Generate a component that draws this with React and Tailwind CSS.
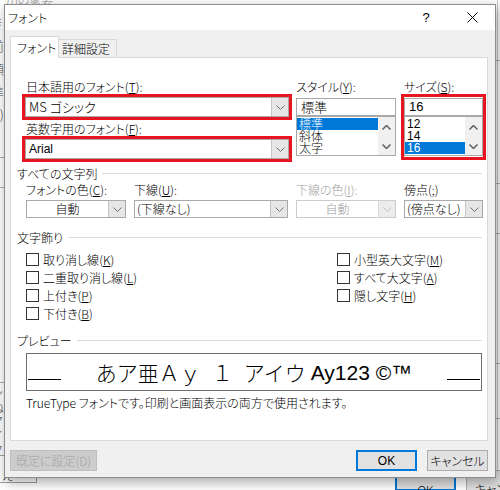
import React from 'react';

function Caret({ up = false, className = 'stroke-[#606060]', w = 1 }) {
  return (
    <svg width="9" height="5" viewBox="0 0 9 5" fill="none" className={className}>
      <path d={up ? 'M0.5 4.5 L4.5 0.5 L8.5 4.5' : 'M0.5 0.5 L4.5 4.5 L8.5 0.5'} strokeWidth={w} />
    </svg>
  );
}

function Combo({ width, height = 'h-[18px]', center = false, disabled = false, children }) {
  return (
    <div
      className={`flex ${width} ${height} border bg-white ${
        disabled ? 'border-[#cccccc] text-[#a0a0a0]' : 'border-[#a9a9a9] text-black'
      }`}
    >
      <div className={`flex-1 flex items-center text-[12px] ${center ? 'justify-center' : 'pl-[2px]'}`}>
        {children}
      </div>
      <div
        className={`w-[17px] flex items-center justify-center border-l ${
          disabled ? 'bg-[#ececec] border-[#dadada]' : 'bg-[#e6e6e6] border-[#c4c4c4]'
        }`}
      >
        <Caret className={disabled ? 'stroke-[#c0c0c0]' : 'stroke-[#707070]'} />
      </div>
    </div>
  );
}

function ListBox({ items, selected }) {
  return (
    <div className="flex h-[40px] border border-[#a9a9a9] bg-white">
      <div className="flex-1 pt-px text-[12px] leading-[12px]">
        {items.map((it) => (
          <div
            key={it}
            className={`h-[12px] pl-[2px] ${it === selected ? 'bg-[#0078d7] text-white' : 'text-black'}`}
          >
            {it}
          </div>
        ))}
      </div>
      <div className="w-[17px] bg-[#f0f0f0] flex flex-col items-center justify-between pt-[8px] pb-[6px]">
        <Caret up className="stroke-[#606060]" w={1.5} />
        <Caret className="stroke-[#606060]" w={1.5} />
      </div>
    </div>
  );
}

function Section({ title, className = '' }) {
  return (
    <div className={`flex items-center h-[15px] pl-[6px] pr-[5px] ${className}`}>
      <span className="text-[12px] leading-[15px]">{title}</span>
      <div className="flex-1 h-px bg-[#dcdcdc] ml-[5px]" />
    </div>
  );
}

function Check({ label, k }) {
  return (
    <div className="flex items-center h-[18px]">
      <div className="w-[13px] h-[13px] border border-[#333333] bg-white" />
      <span className="ml-[4px] text-[12px] leading-[15px]">
        {label}(<span className="underline underline-offset-1">{k}</span>)
      </span>
    </div>
  );
}

function Label({ pre, k, post = '):', className = '' }) {
  return (
    <div className={`h-[15px] text-[12px] leading-[15px] ${className}`}>
      {pre}(<span className="underline underline-offset-1">{k}</span>
      {post}
    </div>
  );
}

function Backdrop() {
  return (
    <>
      <span className="absolute left-[6px] top-[-9px] text-[12px] text-[#8a8a8a]">川の家要</span>
      <div className="absolute left-[-9px] top-[14px] flex flex-col gap-[6px] text-[13px] leading-[17px] text-[#555]">
        <span>き</span>
        <span>前</span>
        <span>順</span>
        <span>準</span>
        <span>D)</span>
      </div>
      <div className="absolute left-0 top-[157px] w-[5px] h-px bg-[#b0b0b0]" />
      <div className="absolute left-[-8px] top-[152px] text-[12px] text-[#aaa]">S</div>
      <div className="absolute left-0 top-[187px] w-[5px] h-px bg-[#b0b0b0]" />
      <div className="absolute left-0 top-[382px] w-[5px] h-px bg-[#b0b0b0]" />
      <div className="absolute left-[-9px] top-[386px] flex flex-col text-[13px] leading-[14px] text-[#555]">
        <span>ン</span>
        <span>ぬ</span>
        <span>マ</span>
        <span>イ</span>
        <span>ク</span>
      </div>
      <div className="absolute left-[-5px] top-[455px] w-[42px] h-[28px] border border-[#a0a0a0] bg-white text-[12px] pl-[6px] pt-[10px]">え</div>
      <div className="absolute left-[497px] top-0 w-px h-[490px] bg-[#c8c8c8]" />
      <div className="absolute left-[496px] top-[60px] w-[5px] h-px bg-[#b0b0b0]" />
      <div className="absolute left-[496px] top-[183px] w-[5px] h-px bg-[#b0b0b0]" />
      <div className="absolute left-[496px] top-[233px] w-[5px] h-px bg-[#b0b0b0]" />
      <div className="absolute left-[496px] top-[363px] w-[5px] h-px bg-[#b0b0b0]" />
      <div className="absolute left-[496px] top-[418px] w-[5px] h-px bg-[#b0b0b0]" />
      <div className="absolute left-[395px] top-[470px] w-[61px] h-[21px] border-2 border-[#0078d7] bg-[#e1e1e1] flex justify-center pt-[9px] text-[12px]">
        OK
      </div>
      <div className="absolute left-[466px] top-[470px] w-[50px] h-[21px] border border-[#adadad] bg-[#e1e1e1] pl-[8px] pt-[9px] text-[12px]">
        キャン
      </div>
    </>
  );
}

export default function App() {
  return (
    <div className="relative w-[500px] h-[490px] overflow-hidden bg-white text-black font-light font-['Noto_Sans_CJK_JP','Noto_Sans',sans-serif] [font-feature-settings:'palt']">
      <Backdrop />
      <div className="absolute left-[4px] top-[4px] w-[492px] h-[474px] border border-[#8c8c8c] bg-[#f0f0f0] shadow-[2px_4px_12px_rgba(0,0,0,0.35)] flex flex-col">
        {/* title bar */}
        <div className="h-[25px] bg-white flex items-center">
          <span className="flex-1 pl-[3px] text-[12px]">フォント</span>
          <div className="w-[46px] h-full flex items-center justify-center text-[13px] font-['Liberation_Sans',sans-serif]">
            ?
          </div>
          <div className="w-[46px] h-full flex items-center justify-center">
            <svg width="11" height="11" viewBox="0 0 11 11" fill="none" className="stroke-black">
              <path d="M0.5 0.5 L10.5 10.5 M10.5 0.5 L0.5 10.5" strokeWidth="1" />
            </svg>
          </div>
        </div>

        {/* body */}
        <div className="flex-1 flex flex-col pt-[6px]">
          <div className="flex items-end h-[22px] ml-[5px] -mb-px">
            <div className="relative z-10 h-[22px] w-[49px] bg-white border border-b-0 border-[#d9d9d9] pl-[6px] pt-[4px] text-[12px] leading-[13px]">
              フォント
            </div>
            <div className="h-[19px] w-[58px] border border-l-0 border-[#d9d9d9] bg-[#f0f0f0] pl-[3px] pt-[2px] text-[12px] leading-[13px]">
              詳細設定
            </div>
          </div>

          {/* tab panel */}
          <div className="ml-[5px] w-[478px] h-[384px] border border-[#d9d9d9] bg-white flex flex-col">
            {/* fonts / style / size */}
            <div className="flex items-start pt-[21px] pl-[11px]">
              <div className="w-[270px] flex flex-col">
                <Label pre="日本語用のフォント" k="T" className="ml-[4px]" />
                <div className="border-[3px] border-[#e8141f]">
                  <Combo width="w-full" height="h-[20px]">
                    <span className="pl-px text-[13px]">MS ゴシック</span>
                  </Combo>
                </div>
                <Label pre="英数字用のフォント" k="F" className="ml-[4px] h-[14px] leading-[14px] mt-px" />
                <div className="border-[3px] border-[#e8141f]">
                  <Combo width="w-full" height="h-[20px]">
                    <span className="pl-px text-[12px] font-normal font-['Liberation_Sans',sans-serif]">Arial</span>
                  </Combo>
                </div>
              </div>

              <div className="w-[100px] ml-[4px] flex flex-col">
                <Label pre="スタイル" k="Y" />
                <div className="mt-[4px] h-[18px] border border-[#a9a9a9] bg-white flex items-center pl-[4px] text-[13px]">
                  標準
                </div>
                <ListBox items={['標準', '斜体', '太字']} selected="標準" />
              </div>

              <div className="w-[85px] ml-[5px] flex flex-col">
                <Label pre="サイズ" k="S" className="ml-[3px]" />
                <div className="border-[3px] border-[#e8141f] pt-px pb-px">
                  <div className="h-[18px] border border-[#a9a9a9] bg-white flex items-center pl-[4px] text-[13px] font-normal font-['Liberation_Sans',sans-serif]">
                    16
                  </div>
                  <div className="font-normal font-['Liberation_Sans',sans-serif]">
                    <ListBox items={['12', '14', '16']} selected="16" />
                  </div>
                </div>
              </div>
            </div>

            {/* すべての文字列 */}
            <Section title="すべての文字列" className="mt-[4px]" />
            <div className="flex pl-[15px] mt-px">
              <Label pre="フォントの色" k="C" className="w-[108px]" />
              <Label pre="下線" k="U" className="w-[162px]" />
              <Label pre="下線の色" k="I" className="w-[108px] text-[#a0a0a0]" />
              <Label pre="傍点" k=";" post=")" />
            </div>
            <div className="flex pl-[15px] mt-[3px] gap-[8px]">
              <Combo width="w-[100px]" center>
                自動
              </Combo>
              <Combo width="w-[154px]">(下線なし)</Combo>
              <Combo width="w-[100px]" center disabled>
                自動
              </Combo>
              <Combo width="w-[79px]">(傍点なし)</Combo>
            </div>

            {/* 文字飾り */}
            <Section title="文字飾り" className="mt-[12px]" />
            <div className="flex pl-[15px] mt-[5px]">
              <div className="w-[311px] flex flex-col">
                <Check label="取り消し線" k="K" />
                <Check label="二重取り消し線" k="L" />
                <Check label="上付き" k="P" />
                <Check label="下付き" k="B" />
              </div>
              <div className="flex flex-col">
                <Check label="小型英大文字" k="M" />
                <Check label="すべて大文字" k="A" />
                <Check label="隠し文字" k="H" />
              </div>
            </div>

            {/* プレビュー */}
            <Section title="プレビュー" className="mt-[11px]" />
            <div className="ml-[15px] mt-[5px] w-[456px] h-[38px] border border-[#6e6e6e] flex items-end [font-feature-settings:normal]">
              <div className="w-[33px] h-px bg-black ml-px mb-[10px]" />
              <div className="flex-1 h-full flex items-center justify-center text-[21px] leading-[21px] whitespace-nowrap">
                <span>あア亜Ａｙ</span>
                <span className="inline-block w-[11px]" />
                <span>１</span>
                <span className="inline-block w-[11px]" />
                <span>アイウ</span>
                <span className="ml-[5px] font-normal font-['Liberation_Sans',sans-serif]">Ay123 ©™</span>
              </div>
              <div className="w-[33px] h-px bg-black mr-px mb-[10px]" />
            </div>
            <div className="ml-[15px] mt-[4px] h-[15px] text-[12px] leading-[15px]">
              TrueType フォントです。印刷と画面表示の両方で使用されます。
            </div>
          </div>

          {/* buttons */}
          <div className="flex items-start mt-[9px] ml-[5px] mr-[7px]">
            <div className="w-[87px] h-[21px] border border-[#bfbfbf] bg-[#cccccc] flex items-center justify-center text-[12px] text-[#a3a3a3]">
              既定に設定(D)
            </div>
            <div className="flex-1" />
            <div className="w-[61px] h-[21px] border-2 border-[#0078d7] bg-[#e1e1e1] flex items-center justify-center text-[12px] font-normal font-['Liberation_Sans',sans-serif]">
              OK
            </div>
            <div className="w-[61px] h-[21px] ml-[10px] border border-[#adadad] bg-[#e1e1e1] flex items-center justify-center text-[12px]">
              キャンセル
            </div>
          </div>
        </div>
      </div>
    </div>
  );
}
